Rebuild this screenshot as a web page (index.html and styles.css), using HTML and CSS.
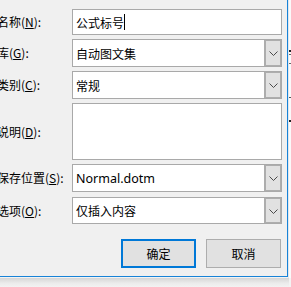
FILE: index.html
```html
<!DOCTYPE html>
<html lang="zh-CN">
<head>
<meta charset="utf-8">
<link rel="stylesheet" href="styles.css">
</head>
<body>
<div class="stage">
  <div class="dialog">
    <div class="form">
      <label class="lbl">名称(<u>N</u>):</label>
      <div class="field input"><span>公式标号</span><span class="caret"></span></div>

      <label class="lbl">库(<u>G</u>):</label>
      <div class="field combo"><span class="val">自动图文集</span><span class="drop"><svg width="9" height="5" viewBox="0 0 9 5"><polyline points="0.5,0.5 4.5,4.5 8.5,0.5" fill="none" stroke="#4a4a4a" stroke-width="1"/></svg></span></div>

      <label class="lbl">类别(<u>C</u>):</label>
      <div class="field combo"><span class="val">常规</span><span class="drop"><svg width="9" height="5" viewBox="0 0 9 5"><polyline points="0.5,0.5 4.5,4.5 8.5,0.5" fill="none" stroke="#4a4a4a" stroke-width="1"/></svg></span></div>

      <label class="lbl">说明(<u>D</u>):</label>
      <div class="field area"></div>

      <label class="lbl">保存位置(<u>S</u>):</label>
      <div class="field combo"><span class="val latin">Normal.dotm</span><span class="drop"><svg width="9" height="5" viewBox="0 0 9 5"><polyline points="0.5,0.5 4.5,4.5 8.5,0.5" fill="none" stroke="#4a4a4a" stroke-width="1"/></svg></span></div>

      <label class="lbl opt">选项(<u>O</u>):</label>
      <div class="field combo opt"><span class="val">仅插入内容</span><span class="drop"><svg width="9" height="5" viewBox="0 0 9 5"><polyline points="0.5,0.5 4.5,4.5 8.5,0.5" fill="none" stroke="#4a4a4a" stroke-width="1"/></svg></span></div>
    </div>
    <div class="buttons">
      <button class="btn primary">确定</button>
      <button class="btn">取消</button>
    </div>
  </div>
  <div class="behind">
    <span class="mark m1"></span>
    <span class="mark m2"></span>
    <span class="mark m3"></span>
    <span class="mark m4"></span>
    <span class="mark m5"></span>
  </div>
</div>
<div class="shadow"></div>
</body>
</html>
```

FILE: styles.css
```css
html, body {
  margin: 0;
  padding: 0;
  background: #f3f3f3;
  overflow: hidden;
}
body {
  width: 291px;
  height: 287px;
  font-family: "Noto Sans CJK SC", "Liberation Sans", sans-serif;
  font-size: 12px;
  color: #000;
}
.stage {
  display: flex;
  height: 278px;
}
.dialog {
  margin-left: -3px;
  width: 291px;
  height: 277px;
  box-sizing: border-box;
  background: #f0f0f0;
  border-right: 1px solid #1883d7;
  border-bottom: 1px solid #1883d7;
  display: flex;
  flex-direction: column;
}
.behind {
  flex: 1;
  position: relative;
  background: #fafafa;
  border-left: 1px solid #dfe7ef;
}
.mark {
  position: absolute;
  left: 0;
  width: 2px;
  height: 1px;
  background: #222;
}
.m1 { top: 50px; height: 2px; }
.m2 { top: 54px; background: #666; }
.m3 { top: 63px; background: #666; }
.m4 { top: 97px; background: #555; }
.m5 { top: 120px; height: 2px; }
.form {
  display: grid;
  grid-template-columns: 75px 210px;
  grid-template-rows: 26px 28px 28px 57px 28px 28px;
  row-gap: 4px;
  padding-top: 9px;
}
.lbl {
  display: flex;
  align-items: center;
  white-space: nowrap;
  line-height: 14px;
}
.lbl u {
  text-decoration: underline;
  text-underline-offset: 1px;
}
.opt { margin-top: 1px; height: 27px; }
.field {
  box-sizing: border-box;
  background: #fff;
  border: 1px solid #a9a9a9;
  display: flex;
  align-items: center;
}
.input {
  padding-left: 3px;
}
.caret {
  width: 1px;
  height: 16px;
  background: #000;
  margin-left: 0;
}
.combo {
  padding-left: 3px;
}
.val {
  flex: 1;
  white-space: nowrap;
}
.latin {
  font-family: "Noto Sans", "Liberation Sans", sans-serif;
  font-size: 12.5px;
}
.drop {
  align-self: stretch;
  width: 17px;
  box-sizing: border-box;
  border: 1px solid #adadad;
  border-left-width: 2px;
  background: #e1e1e1;
  display: flex;
  align-items: center;
  justify-content: center;
}
.drop svg { display: block; margin-top: 1px; }
.buttons {
  display: flex;
  justify-content: flex-end;
  gap: 10px;
  padding-top: 15px;
  padding-right: 6px;
}
.btn {
  box-sizing: border-box;
  width: 75px;
  height: 29px;
  background: #e1e1e1;
  border: 1px solid #adadad;
  font-family: "Noto Sans CJK SC", sans-serif;
  font-size: 12px;
  color: #000;
  padding: 0;
  margin: 0;
}
.primary {
  border: 2px solid #0078d7;
}
.shadow {
  height: 9px;
  background: linear-gradient(#d6d6d6, #ececec 60%, #f2f2f2);
  margin-right: 2px;
}
```
